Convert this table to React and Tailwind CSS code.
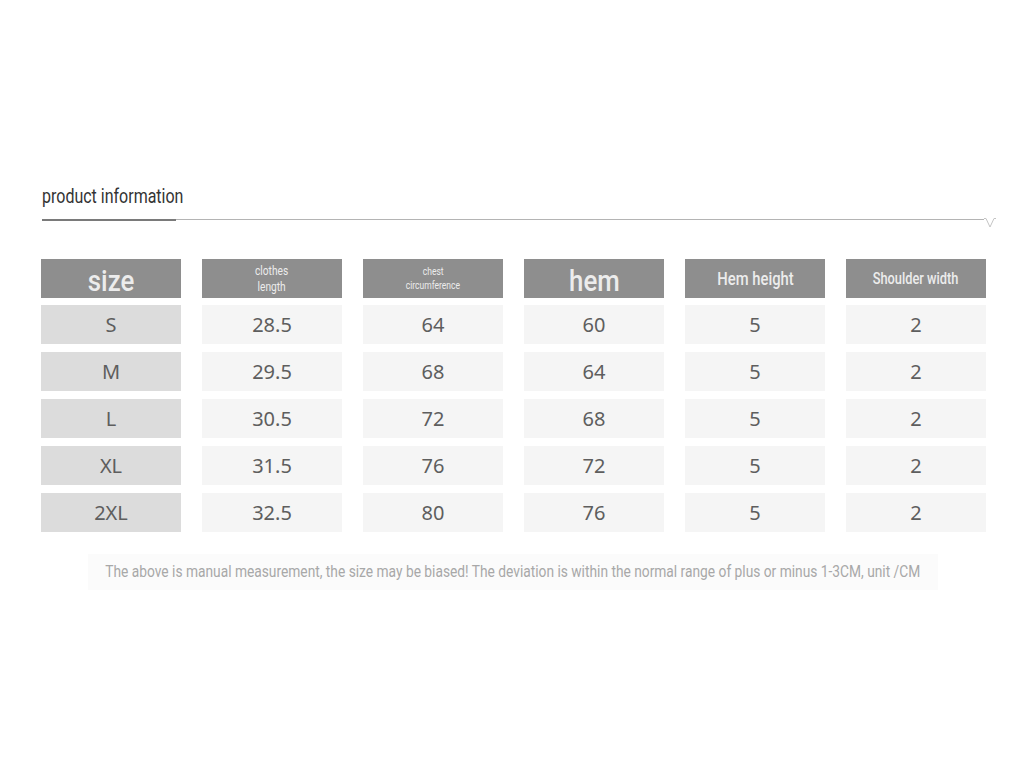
import React from "react";

const COND = { fontFamily: 'Roboto, "Liberation Sans", sans-serif' };
const NUM = { fontFamily: '"Noto Sans", "Open Sans", sans-serif' };

const rows = [
  ["S", "28.5", "64", "60", "5", "2"],
  ["M", "29.5", "68", "64", "5", "2"],
  ["L", "30.5", "72", "68", "5", "2"],
  ["XL", "31.5", "76", "72", "5", "2"],
  ["2XL", "32.5", "80", "76", "5", "2"],
];

function HeadCell({ children, className = "" }) {
  return (
    <div
      className={`h-[39px] bg-[#8e8e8e] text-[#ececec] flex flex-col items-center justify-center leading-none ${className}`}
      style={COND}
    >
      {children}
    </div>
  );
}

export default function App() {
  return (
    <div className="w-[1024px] h-[768px] bg-white pt-[183px]">
      {/* title */}
      <div className="pl-[42px] pr-[28px]">
        <div className="text-[20px] text-[#333] leading-[26px] origin-left scale-x-[0.8] whitespace-nowrap" style={COND}>
          product information
        </div>
        <div className="flex items-start mt-[10px]">
          <div className="w-[134px] h-[2px] bg-[#7a7a7a]" />
          <div className="flex-1 h-px bg-[#b4b4b4]" />
          <svg width="12" height="10" viewBox="0 0 12 10" className="-mt-px">
            <path d="M0 0.5 H2 L6 9 L10 0.5 H12" fill="none" stroke="#c4c4c4" strokeWidth="1" />
          </svg>
        </div>
      </div>

      {/* table */}
      <div className="pl-[41px] pt-[31px]">
        <div className="grid grid-cols-[repeat(6,140px)] gap-x-[21px]">
          <HeadCell className="justify-end">
            <span className="text-[30px] font-medium leading-[34px] scale-x-[0.86]">size</span>
          </HeadCell>
          <HeadCell className="text-[12px]">
            <span className="leading-[16px] scale-x-[0.85]">clothes</span>
            <span className="leading-[16px] scale-x-[0.85]">length</span>
          </HeadCell>
          <HeadCell className="text-[10px]">
            <span className="leading-[14px] scale-x-[0.85]">chest</span>
            <span className="leading-[14px] scale-x-[0.85]">circumference</span>
          </HeadCell>
          <HeadCell className="justify-end">
            <span className="text-[30px] font-medium leading-[34px] scale-x-[0.86]">hem</span>
          </HeadCell>
          <HeadCell>
            <span className="text-[18px] font-medium scale-x-[0.82] whitespace-nowrap">Hem height</span>
          </HeadCell>
          <HeadCell>
            <span className="text-[16px] font-medium scale-x-[0.8] whitespace-nowrap">Shoulder width</span>
          </HeadCell>
        </div>
        <div className="flex flex-col gap-[8px] mt-[7px]">
          {rows.map((r) => (
            <div key={r[0]} className="grid grid-cols-[repeat(6,140px)] gap-x-[21px]">
              {r.map((v, i) => (
                <div
                  key={i}
                  className={`h-[39px] flex items-center justify-center text-[20px] text-[#5e5e5e] ${
                    i === 0 ? "bg-[#dcdcdc]" : "bg-[#f5f5f5]"
                  }`}
                  style={NUM}
                >
                  {v}
                </div>
              ))}
            </div>
          ))}
        </div>
      </div>

      {/* note */}
      <div className="flex justify-center mt-[22px] pl-[2px]">
        <div className="px-[20px] py-[6px] bg-[#fbfbfb] text-[16px] text-[#a8a8a8] whitespace-nowrap scale-x-[0.86]" style={COND}>
          The above is manual measurement, the size may be biased! The deviation is within the normal range of plus or minus 1-3CM, unit /CM
        </div>
      </div>
    </div>
  );
}
